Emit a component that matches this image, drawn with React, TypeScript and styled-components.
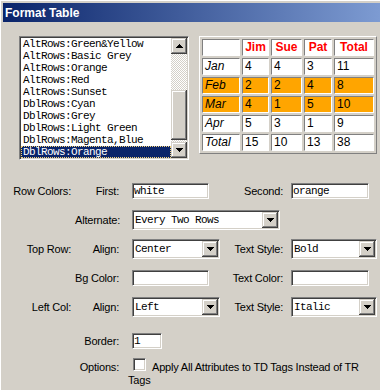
import { FC, Fragment } from "react";
import styled, { createGlobalStyle, css } from "styled-components";

const GlobalStyle = createGlobalStyle`
  html, body {
    margin: 0;
    padding: 0;
    background: #d4d0c8;
  }
  body {
    font-family: "Liberation Sans", Arial, sans-serif;
    font-size: 11px;
    color: #000000;
  }
`;

const mono = css`
  font-family: "Liberation Mono", "DejaVu Sans Mono", monospace;
  font-size: 11px;
  letter-spacing: -0.6px;
`;

const sunken = css`
  box-sizing: border-box;
  border: 1px solid;
  border-color: #808080 #ffffff #ffffff #808080;
  box-shadow: inset 1px 1px #404040, inset -1px -1px #d4d0c8;
  background: #ffffff;
`;

const raised = css`
  box-sizing: border-box;
  background: #d4d0c8;
  box-shadow: inset -1px -1px #404040, inset 1px 1px #d4d0c8,
    inset -2px -2px #808080, inset 2px 2px #ffffff;
`;

const Window = styled.div`
  width: 380px;
  height: 390px;
  box-sizing: border-box;
  border-left: 1px solid #ffffff;
  border-top: 1px solid #ffffff;
  padding: 2px 0 0 2px;
  overflow: hidden;
`;

const TitleBar = styled.div`
  height: 19px;
  padding-left: 2px;
  display: flex;
  align-items: center;
  background: linear-gradient(to right, #0a246a, #7d9bd2);
  color: #ffffff;
  font-weight: bold;
  font-size: 12px;
`;

const TopArea = styled.div`
  display: flex;
  align-items: flex-start;
  gap: 10px;
  padding: 14px 0 0 16px;
`;

const ListBox = styled.div`
  ${sunken}
  width: 170px;
  height: 124px;
  padding: 1px;
  display: flex;
`;

const Items = styled.ul`
  list-style: none;
  margin: 0;
  padding: 0;
  width: 150px;
`;

const Item = styled.li<{ $selected?: boolean }>`
  ${mono}
  height: 12px;
  line-height: 12px;
  padding-left: 2px;
  white-space: pre;
  ${p => p.$selected && css`
    background: #0a246a;
    color: #ffffff;
    outline: 1px dotted #f3d27a;
    outline-offset: -1px;
  `}
`;

const ScrollBar = styled.div`
  width: 16px;
  display: flex;
  flex-direction: column;
  background: repeating-conic-gradient(#d4d0c8 0 25%, #ffffff 0 50%) 0 0 / 2px 2px;
`;

const ScrollButton = styled.div`
  ${raised}
  width: 16px;
  height: 16px;
  flex-shrink: 0;
  display: flex;
  align-items: center;
  justify-content: center;
`;

const Track = styled.div`
  flex: 1;
`;

const Thumb = styled.div`
  ${raised}
  height: 50px;
  margin-top: 36px;
`;

const Preview = styled.div`
  display: grid;
  grid-template-columns: 38px 27px 31px 28px 40px;
  grid-auto-rows: 17px;
  gap: 2px;
  padding: 2px;
  border: 1px solid;
  border-color: #ffffff #808080 #808080 #ffffff;
`;

type CellKind = "head" | "side" | "data";

const Cell = styled.div<{ $kind: CellKind; $hl?: boolean }>`
  box-sizing: border-box;
  border: 1px solid;
  border-color: #808080 #ffffff #ffffff #808080;
  background: ${p => (p.$hl ? "#ffa500" : "#ffffff")};
  font-size: 12px;
  line-height: 15px;
  padding-left: 2px;
  white-space: nowrap;
  overflow: hidden;
  ${p => p.$kind === "head" && css`
    font-weight: bold;
    color: #ff0000;
    text-align: center;
    padding-left: 0;
  `}
  ${p => p.$kind === "side" && css`
    font-style: italic;
  `}
`;

const Form = styled.div`
  display: flex;
  flex-direction: column;
`;

const FormRow = styled.div<{ $mt: number }>`
  display: grid;
  grid-template-columns: 72px 53px 98px 61px 93px;
  height: 20px;
  align-items: center;
  margin-top: ${p => p.$mt}px;
`;

const OptionsRow = styled(FormRow)`
  height: auto;
  align-items: baseline;
`;

const Label = styled.span<{ $col: number; $pr: number }>`
  grid-column: ${p => p.$col};
  text-align: right;
  padding-right: ${p => p.$pr}px;
  letter-spacing: -0.2px;
  white-space: nowrap;
`;

const Slot = styled.div<{ $col: string }>`
  grid-column: ${p => p.$col};
  display: flex;
  padding-left: 4px;
`;

const TextBox = styled.input<{ $w: number }>`
  ${sunken}
  ${mono}
  width: ${p => p.$w}px;
  height: 16px;
  padding: 0 1px;
  margin: 0;
  outline: none;
  color: #000000;
`;

const SelectBox = styled.div<{ $w: number }>`
  ${sunken}
  width: ${p => p.$w}px;
  height: 20px;
  padding: 1px;
  display: flex;
`;

const SelectValue = styled.span`
  ${mono}
  flex: 1;
  line-height: 16px;
  padding-left: 1px;
  white-space: pre;
`;

const OptionText = styled.div`
  grid-column: 3 / 6;
  line-height: 13px;
  letter-spacing: -0.2px;
`;

const CheckBox = styled.span`
  ${sunken}
  display: inline-block;
  width: 13px;
  height: 13px;
  margin: 0 6px 0 5px;
  vertical-align: baseline;
`;

const Arrow: FC<{ up?: boolean }> = ({ up }) => (
    <svg width="7" height="4" viewBox="0 0 7 4" shapeRendering="crispEdges">
        <path
            fill="#000000"
            d={up
                ? "M3 0h1v1h1v1h1v1h1v1H0V3h1V2h1V1h1z"
                : "M0 0h7v1H6v1H5v1H4v1H3V3H2V2H1V1H0z"}
        />
    </svg>
);

const Select: FC<{ value: string; width: number }> = ({ value, width }) => (
    <SelectBox $w={width}>
        <SelectValue>{value}</SelectValue>
        <ScrollButton>
            <Arrow />
        </ScrollButton>
    </SelectBox>
);

const presets = [
    "AltRows:Green&Yellow",
    "AltRows:Basic Grey",
    "AltRows:Orange",
    "AltRows:Red",
    "AltRows:Sunset",
    "DblRows:Cyan",
    "DblRows:Grey",
    "DblRows:Light Green",
    "DblRows:Magenta,Blue",
    "DblRows:Orange",
];

const rows = [
    { name: "Jan", values: ["4", "4", "3", "11"], hl: false },
    { name: "Feb", values: ["2", "2", "4", "8"], hl: true },
    { name: "Mar", values: ["4", "1", "5", "10"], hl: true },
    { name: "Apr", values: ["5", "3", "1", "9"], hl: false },
    { name: "Total", values: ["15", "10", "13", "38"], hl: false },
];

const App: FC = () => {
    return (
        <>
            <GlobalStyle />
            <Window>
                <TitleBar>Format Table</TitleBar>
                <TopArea>
                    <ListBox>
                        <Items>
                            {presets.map(p => (
                                <Item key={p} $selected={p === "DblRows:Orange"}>{p}</Item>
                            ))}
                        </Items>
                        <ScrollBar>
                            <ScrollButton><Arrow up /></ScrollButton>
                            <Track><Thumb /></Track>
                            <ScrollButton><Arrow /></ScrollButton>
                        </ScrollBar>
                    </ListBox>
                    <Preview>
                        <Cell $kind="head" />
                        {["Jim", "Sue", "Pat", "Total"].map(h => (
                            <Cell key={h} $kind="head">{h}</Cell>
                        ))}
                        {rows.map(r => (
                            <Fragment key={r.name}>
                                <Cell $kind="side" $hl={r.hl}>{r.name}</Cell>
                                {r.values.map((v, i) => (
                                    <Cell key={i} $kind="data" $hl={r.hl}>{v}</Cell>
                                ))}
                            </Fragment>
                        ))}
                    </Preview>
                </TopArea>
                <Form>
                    <FormRow $mt={21}>
                        <Label $col={1} $pr={4}>Row Colors:</Label>
                        <Label $col={2} $pr={9}>First:</Label>
                        <Slot $col="3"><TextBox $w={77} defaultValue="white" /></Slot>
                        <Label $col={4} $pr={4}>Second:</Label>
                        <Slot $col="5"><TextBox $w={78} defaultValue="orange" /></Slot>
                    </FormRow>
                    <FormRow $mt={9}>
                        <Label $col={2} $pr={9}>Alternate:</Label>
                        <Slot $col="3 / 6"><Select value="Every Two Rows" width={148} /></Slot>
                    </FormRow>
                    <FormRow $mt={9}>
                        <Label $col={1} $pr={4}>Top Row:</Label>
                        <Label $col={2} $pr={9}>Align:</Label>
                        <Slot $col="3"><Select value="Center" width={88} /></Slot>
                        <Label $col={4} $pr={4}>Text Style:</Label>
                        <Slot $col="5"><Select value="Bold" width={86} /></Slot>
                    </FormRow>
                    <FormRow $mt={9}>
                        <Label $col={2} $pr={9}>Bg Color:</Label>
                        <Slot $col="3"><TextBox $w={77} defaultValue="" /></Slot>
                        <Label $col={4} $pr={4}>Text Color:</Label>
                        <Slot $col="5"><TextBox $w={78} defaultValue="" /></Slot>
                    </FormRow>
                    <FormRow $mt={9}>
                        <Label $col={1} $pr={4}>Left Col:</Label>
                        <Label $col={2} $pr={9}>Align:</Label>
                        <Slot $col="3"><Select value="Left" width={88} /></Slot>
                        <Label $col={4} $pr={4}>Text Style:</Label>
                        <Slot $col="5"><Select value="Italic" width={86} /></Slot>
                    </FormRow>
                    <FormRow $mt={14}>
                        <Label $col={2} $pr={9}>Border:</Label>
                        <Slot $col="3"><TextBox $w={30} defaultValue="1" /></Slot>
                    </FormRow>
                    <OptionsRow $mt={7}>
                        <Label $col={2} $pr={9}>Options:</Label>
                        <OptionText>
                            <CheckBox />Apply All Attributes to TD Tags Instead of TR Tags
                        </OptionText>
                    </OptionsRow>
                </Form>
            </Window>
        </>
    );
};

export default App;
